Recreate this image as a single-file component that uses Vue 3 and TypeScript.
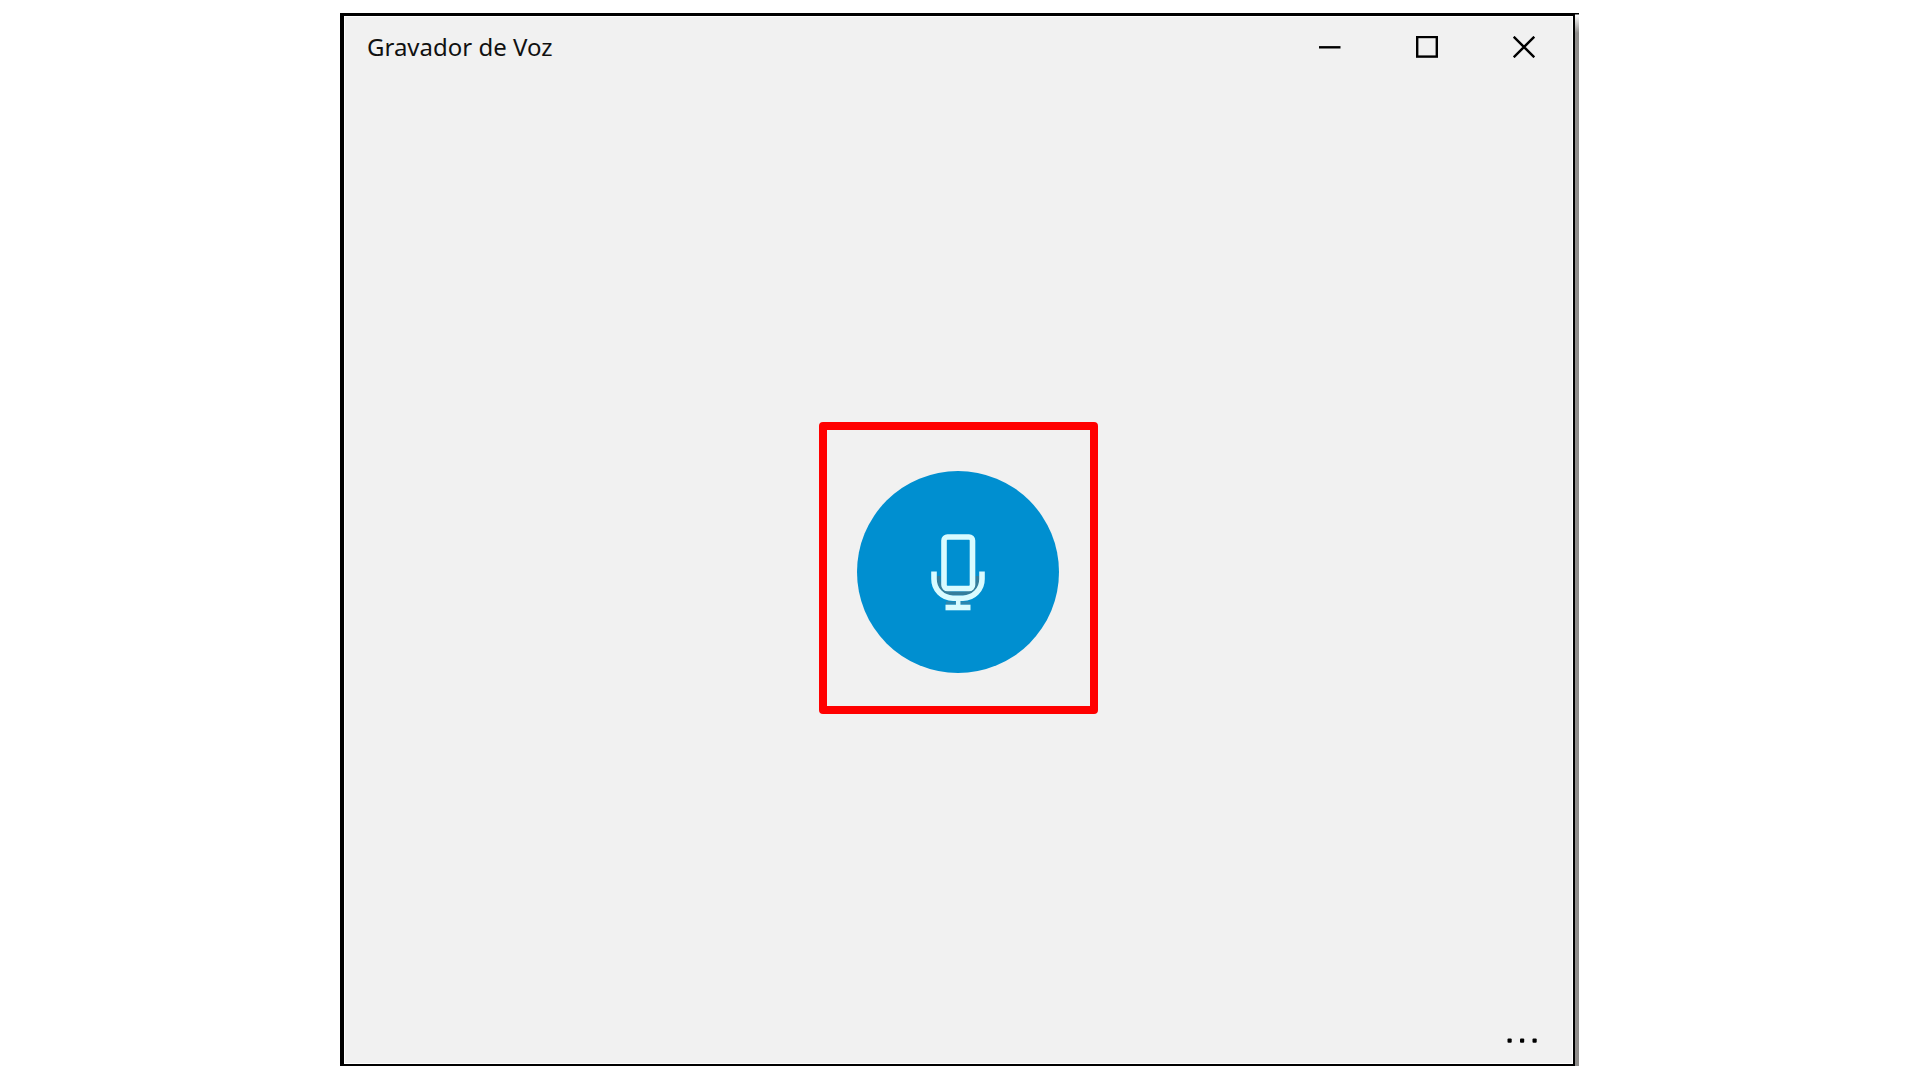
<script setup lang="ts">
import { ref } from 'vue'

const title = 'Gravador de Voz'
const recording = ref(false)
</script>

<template>
  <div class="desktop">
    <div class="window-edge">
      <section class="window" :aria-label="title">
        <header class="titlebar">
          <h1 class="title">{{ title }}</h1>
          <div class="controls">
            <button type="button" class="control" aria-label="Minimizar">
              <svg width="22" height="22" viewBox="0 0 22 22"><path d="M0 11.300H21.500" /></svg>
            </button>
            <button type="button" class="control" aria-label="Maximizar">
              <svg width="22" height="22" viewBox="0 0 22 22"><rect x="1.200" y="1" width="19.600" height="19.600" /></svg>
            </button>
            <button type="button" class="control" aria-label="Fechar">
              <svg width="22" height="22" viewBox="0 0 22 22"><path d="M.7.7 21.3 21.3M21.3.7.7 21.3" /></svg>
            </button>
          </div>
        </header>

        <main class="content">
          <div class="highlight">
            <button
              type="button"
              class="record"
              aria-label="Gravar"
              :aria-pressed="recording"
              @click="recording = !recording"
            >
              <svg width="54" height="77" viewBox="0 0 54 77" fill="none">
                <path d="M7.5 42V45A14 14 0 0 0 21.5 59.5H32.5A14 14 0 0 0 46.5 45V42" stroke="#347d9b" stroke-width="4" />
                <path d="M15 69H39" stroke="#2f86ad" stroke-width="3" />
                <g stroke="#d9fbff" stroke-width="5.6">
                  <rect x="13" y="3" width="28.500" height="51.500" rx="3.500" />
                  <path d="M3 37.500V45A19 19 0 0 0 22 64.200H32A19 19 0 0 0 51 45V37.500" />
                  <path d="M27.200 64V74" stroke-width="4.500" />
                  <path d="M14.500 73.500H39.500" />
                </g>
              </svg>
            </button>
          </div>
        </main>

        <footer class="commands">
          <button type="button" class="more" aria-label="Ver mais">
            <svg width="30" height="6" viewBox="0 0 30 6">
              <rect x="0.500" y="0.500" width="4.200" height="4.200" rx="1" />
              <rect x="13" y="0.500" width="4.200" height="4.200" rx="1" />
              <rect x="25.500" y="0.500" width="4.200" height="4.200" rx="1" />
            </svg>
          </button>
        </footer>
      </section>
    </div>
  </div>
</template>

<style>
body {
  margin: 0;
  background: #fff;
}
</style>

<style scoped>
.desktop {
  box-sizing: border-box;
  display: flex;
  min-height: 100vh;
  padding: 13px 341px 14px 340px;
  font-family: "Noto Sans", "Open Sans", sans-serif;
}

.window-edge {
  display: flex;
  flex: 1;
  padding-right: 4px;
  background: linear-gradient(#000 1px, #fff 2px, #8f8d8b 20px);
}

.window {
  display: flex;
  flex: 1;
  flex-direction: column;
  border: solid #000;
  border-width: 3px 2px 2px 4px;
  background: #f1f1f1;
  box-shadow: inset 0 0 0 1px #fff;
}

.titlebar {
  display: flex;
  align-items: center;
  justify-content: space-between;
  height: 62px;
  padding: 0 1px 0 23px;
}

.title {
  margin: 0;
  color: #111;
  font-size: 24px;
  font-weight: 400;
  line-height: 32px;
}

.controls {
  display: flex;
}

button {
  display: flex;
  align-items: center;
  justify-content: center;
  padding: 0;
  border: 0;
  background: none;
}

.control {
  width: 97px;
  height: 62px;
}

.control svg {
  fill: none;
  stroke: #000;
  stroke-width: 2.4;
}

.content {
  display: flex;
  flex: 1;
  align-items: center;
  justify-content: center;
  padding-top: 40px;
}

.highlight {
  padding: 41px 31px 33px 30px;
  border: 8px solid #f00;
  border-radius: 4px;
}

.record {
  width: 202px;
  height: 202px;
  border-radius: 50%;
  background: #008fd0;
}

.commands {
  display: flex;
  justify-content: flex-end;
}

.more {
  width: 102px;
  height: 46px;
}
</style>
